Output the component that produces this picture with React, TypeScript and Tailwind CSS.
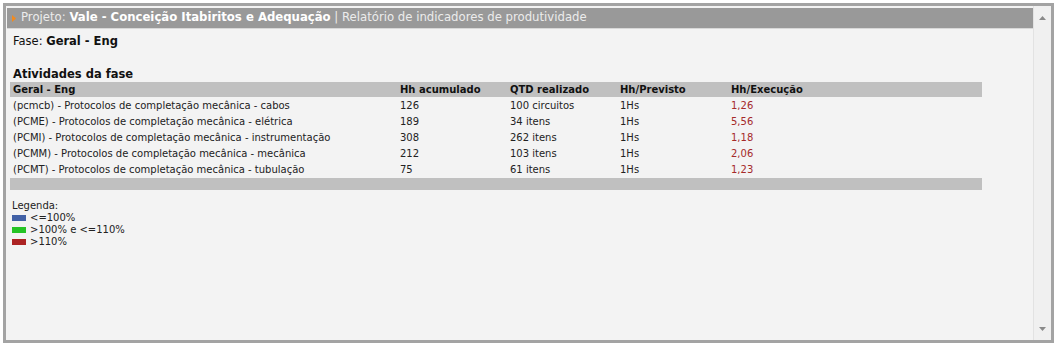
import { FC } from "react";

type Row = {
  name: string;
  hh: string;
  qtd: string;
  previsto: string;
  execucao: string;
};

const rows: Row[] = [
  { name: "(pcmcb) - Protocolos de completação mecânica - cabos", hh: "126", qtd: "100 circuitos", previsto: "1Hs", execucao: "1,26" },
  { name: "(PCME) - Protocolos de completação mecânica - elétrica", hh: "189", qtd: "34 itens", previsto: "1Hs", execucao: "5,56" },
  { name: "(PCMI) - Protocolos de completação mecânica - instrumentação", hh: "308", qtd: "262 itens", previsto: "1Hs", execucao: "1,18" },
  { name: "(PCMM) - Protocolos de completação mecânica - mecânica", hh: "212", qtd: "103 itens", previsto: "1Hs", execucao: "2,06" },
  { name: "(PCMT) - Protocolos de completação mecânica - tubulação", hh: "75", qtd: "61 itens", previsto: "1Hs", execucao: "1,23" },
];

const legend = [
  { color: "bg-[#4161a6]", label: "<=100%" },
  { color: "bg-[#25c325]", label: ">100% e <=110%" },
  { color: "bg-[#ac2323]", label: ">110%" },
];

const cols = "grid grid-cols-[387px_110px_110px_111px_1fr]";

const Scrollbar: FC = () => (
  <div className="w-[18px] flex flex-col justify-between items-center border-l border-[#e2e2e2] bg-[#f0f0f0] pt-[10px] pb-[9px]">
    <svg width="7" height="4" viewBox="0 0 7 4">
      <path d="M0 4 L3.5 0 L7 4 Z" fill="#8a8a8a" />
    </svg>
    <svg width="7" height="4" viewBox="0 0 7 4">
      <path d="M0 0 L3.5 4 L7 0 Z" fill="#8a8a8a" />
    </svg>
  </div>
);

export default function App() {
  return (
    <div className="w-[1060px] h-[348px] bg-white pt-[3px] pl-[3px] font-['DejaVu_Sans',Verdana,sans-serif]">
      <div className="w-[1051px] h-[340px] border-[3px] border-[#a3a3a3] bg-[#f3f3f3] flex">
        <div className="flex-1 flex flex-col pl-px pt-[2px]">
          <div className="h-[21px] bg-[#999999] border-b border-[#d8d8d8] flex items-center pl-[5px] text-[11.7px] text-[#ececec]">
            <svg width="4" height="7" viewBox="0 0 4 7" className="mr-[5px]">
              <path d="M0 0 L4 3.5 L0 7 Z" fill="#f28a1e" />
            </svg>
            <span>Projeto:&nbsp;</span>
            <span className="font-bold text-white">Vale - Conceição Itabiritos e Adequação</span>
            <span>&nbsp;|&nbsp;Relatório de indicadores de produtividade</span>
          </div>

          <div className="pl-[6px] pt-[5px] text-[11.5px] leading-[14px] text-[#111]">
            Fase: <span className="font-bold">Geral - Eng</span>
          </div>

          <div className="pl-[3px] mt-[17px] w-[975px]">
            <div className="pl-[3px] text-[11.5px] leading-[16px] pt-[1px] font-bold text-[#111]">
              Atividades da fase
            </div>
            <div className={`${cols} h-[15px] items-center bg-[#c0c0c0] text-[10px] font-bold text-[#111] pl-[3px]`}>
              <span>Geral - Eng</span>
              <span>Hh acumulado</span>
              <span>QTD realizado</span>
              <span>Hh/Previsto</span>
              <span>Hh/Execução</span>
            </div>
            {rows.map((row) => (
              <div key={row.name} className={`${cols} h-[16px] items-end text-[10px] text-[#222] pl-[3px]`}>
                <span>{row.name}</span>
                <span>{row.hh}</span>
                <span>{row.qtd}</span>
                <span>{row.previsto}</span>
                <span className="text-[#a52a2a]">{row.execucao}</span>
              </div>
            ))}
            <div className="h-[12px] mt-px bg-[#c0c0c0]" />
          </div>

          <div className="pl-[5px] mt-[10px] text-[10px] leading-[12px] text-[#222]">
            <div>Legenda:</div>
            {legend.map((item) => (
              <div key={item.label} className="flex items-center gap-[4px]">
                <span className={`w-[14px] h-[6px] ${item.color}`} />
                <span>{item.label}</span>
              </div>
            ))}
          </div>
        </div>
        <Scrollbar />
      </div>
    </div>
  );
}
